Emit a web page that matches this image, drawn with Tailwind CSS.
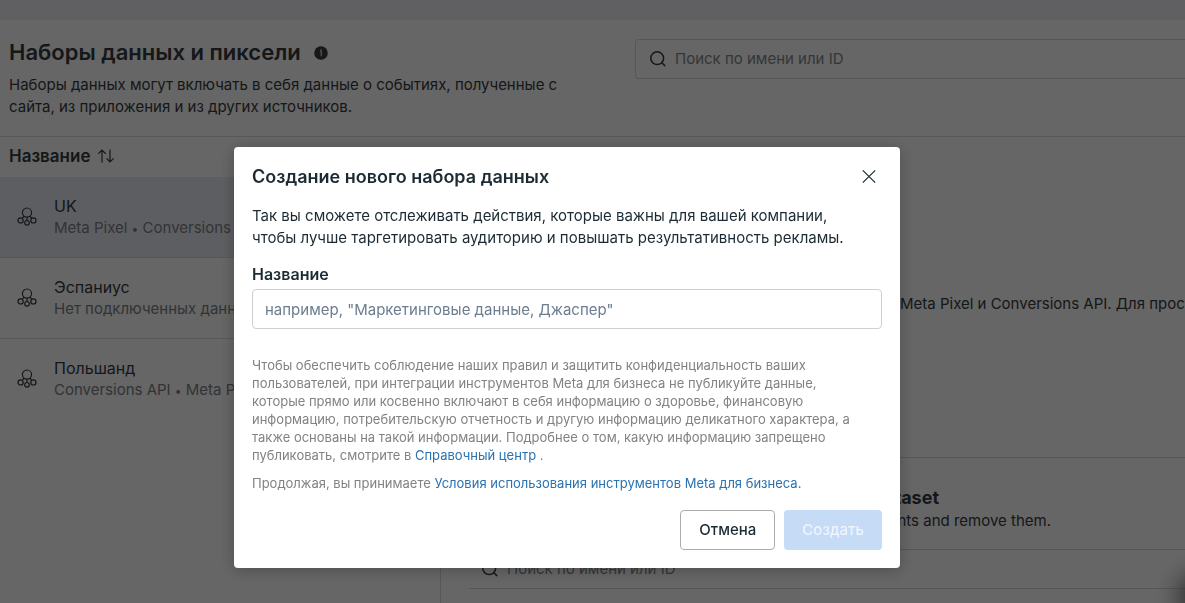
<!DOCTYPE html>
<html lang="ru">

<head>
    <meta charset="UTF-8">
    <meta name="viewport" content="width=device-width, initial-scale=1.0">
    <title>Наборы данных и пиксели</title>
    <script src="https://cdn.jsdelivr.net/npm/@tailwindcss/browser@4"></script>
</head>

<body class="h-screen overflow-hidden bg-white font-['Inter','Noto_Sans',sans-serif] text-[#363b3e]">
    <svg class="hidden">
        <symbol id="dataset" viewBox="0 0 20 20">
            <g fill="none" stroke="currentColor" stroke-width="1.2">
                <circle cx="10" cy="5.6" r="4.6" />
                <circle cx="3.6" cy="13.4" r="2.6" />
                <circle cx="16.4" cy="13.4" r="2.6" />
                <circle cx="10" cy="15.8" r="2.3" />
                <path d="M7 9.1 5.3 11.4M13 9.1l1.7 2.3M10 10.2v3.3" />
            </g>
        </symbol>
        <symbol id="search" viewBox="0 0 18 18">
            <circle cx="8.2" cy="8.2" r="6.4" fill="none" stroke="currentColor" stroke-width="1.5" />
            <path d="m12.8 12.8 3 2.8" fill="none" stroke="currentColor" stroke-width="1.5" stroke-linecap="round" />
        </symbol>
    </svg>

    <!-- Page -->
    <div class="flex h-full flex-col">
        <div class="h-5 shrink-0 bg-[#f1f1f4]"></div>
        <header class="flex h-[117px] shrink-0 items-start border-b border-[#dcdcdc] pl-[9px]">
            <div class="w-[626px] shrink-0 pt-[18px]">
                <div class="flex items-center gap-[13px]">
                    <h1 class="text-[22px] leading-7 font-semibold">Наборы данных и пиксели</h1>
                    <svg class="mt-[2px] size-[14px]" viewBox="0 0 14 14">
                        <circle cx="7" cy="7" r="6.8" fill="currentColor" />
                        <path d="M6 5.6h1.3v4.6M7.2 3v1.4" fill="none" stroke="#b5b8ba" stroke-width="1.5" />
                    </svg>
                </div>
                <p class="mt-2 max-w-[580px] text-[15px] leading-[22px]">Наборы данных могут включать в себя данные о событиях, полученные с сайта, из приложения и из других источников.</p>
            </div>
            <label class="mt-[19px] flex h-10 grow items-center gap-2 rounded-l border border-r-0 border-[#d4d8dc] pl-[13px]">
                <svg class="size-[18px] shrink-0"><use href="#search" /></svg>
                <input type="search" placeholder="Поиск по имени или ID" aria-label="Поиск"
                    class="min-w-0 grow text-[15px] outline-none placeholder:text-[#83888c]">
            </label>
        </header>

        <main class="flex min-h-0 grow">
            <aside class="flex w-[441px] shrink-0 flex-col">
                <div class="flex h-10 items-center gap-[6px] pb-[2px] pl-[9px]">
                    <h2 class="text-[17px] leading-6 font-semibold">Название</h2>
                    <svg class="h-[14px] w-[18px]" viewBox="0 0 18 14" fill="none" stroke="currentColor" stroke-width="1.2">
                        <path d="M5 13.5V1M1.2 4.8 5 1l3.8 3.8M13 .5V13M9.6 9.4 13 13l3.6-3.6" />
                    </svg>
                </div>
                <ul>
                    <li class="flex h-[81px] items-center gap-[17px] border-b border-[#dcdcdc] bg-[#e9ecf3] pl-[17px]">
                        <svg class="size-5 shrink-0"><use href="#dataset" /></svg>
                        <div class="whitespace-nowrap">
                            <p class="text-base leading-[22px]">UK</p>
                            <p class="text-[15px] leading-[22px] text-[#7c8185]">Meta Pixel <span class="text-xs">•</span> Conversions API</p>
                        </div>
                    </li>
                    <li class="flex h-[81px] items-center gap-[17px] border-b border-[#dcdcdc] pl-[17px]">
                        <svg class="size-5 shrink-0"><use href="#dataset" /></svg>
                        <div class="whitespace-nowrap">
                            <p class="text-base leading-[22px]">Эспаниус</p>
                            <p class="text-[15px] leading-[22px] text-[#7c8185]">Нет подключенных данных</p>
                        </div>
                    </li>
                    <li class="flex h-20 items-center gap-[17px] pl-[17px]">
                        <svg class="size-5 shrink-0"><use href="#dataset" /></svg>
                        <div class="whitespace-nowrap">
                            <p class="text-base leading-[22px]">Польшанд</p>
                            <p class="text-[15px] leading-[22px] text-[#7c8185]">Conversions API <span class="text-xs">•</span> Meta Pixel</p>
                        </div>
                    </li>
                </ul>
                <div class="mt-10 grow border-r border-[#dcdcdc]"></div>
            </aside>

            <section class="min-w-0 grow">
                <div class="flex h-[321px] items-center overflow-hidden border-b border-[#dcdcdc] pl-[459px] text-[15px] whitespace-nowrap">
                    <p class="pt-[14px]">Meta Pixel и Conversions API. Для просмотра</p>
                </div>
                <div class="h-[91px] pt-7 whitespace-nowrap">
                    <div class="w-[498px] text-right">
                        <h2 class="text-lg leading-6 font-bold">Dataset</h2>
                    </div>
                    <div class="w-[610px] text-right">
                        <p class="text-[15px] leading-[22px]">events and remove them.</p>
                    </div>
                </div>
                <label class="ml-7 flex h-10 items-center gap-2 border-y border-[#d8d8d8] pl-3">
                    <svg class="size-[18px] shrink-0"><use href="#search" /></svg>
                    <input type="search" placeholder="Поиск по имени или ID" aria-label="Поиск объектов"
                        class="min-w-0 grow text-[15px] outline-none placeholder:text-[#83888c]">
                </label>
            </section>
        </main>
    </div>

    <!-- Modal -->
    <div class="fixed inset-0 flex items-start justify-center overflow-hidden bg-black/60 pt-[147px] pr-[51px]">
        <div class="absolute -right-8 -bottom-2 size-7 rounded-full shadow-[0_0_26px_10px_rgba(0,0,0,0.6)]"></div>
        <div role="dialog" aria-labelledby="dialog-title"
            class="w-full max-w-[666px] rounded bg-white p-[18px] text-[#1c2b33] shadow-[0_2px_16px_rgba(0,0,0,0.25)]">
            <div class="flex items-center justify-between pr-[5px]">
                <h2 id="dialog-title" class="text-[18px] leading-6 font-semibold">Создание нового набора данных</h2>
                <button type="button" aria-label="Закрыть">
                    <svg class="size-4" viewBox="0 0 16 16" fill="none" stroke="currentColor" stroke-width="1.2">
                        <path d="m1.8 1.3 12.4 12.4M14.2 1.3 1.8 13.7" />
                    </svg>
                </button>
            </div>
            <p class="mt-4 text-[15px] leading-[22px]">Так вы сможете отслеживать действия, которые важны для вашей компании,<br>
                чтобы лучше таргетировать аудиторию и повышать результативность рекламы.</p>
            <label for="name" class="mt-[14px] block text-base leading-[22px] font-semibold">Название</label>
            <input id="name" type="text" placeholder='например, "Маркетинговые данные, Джаспер"'
                class="mt-1 h-10 w-full rounded border border-[#ccd0d4] px-3 text-[15px] placeholder:text-[#6b7d8e]">
            <p class="mt-[27px] text-[13px] leading-[18px] text-[#808285]">Чтобы обеспечить соблюдение наших правил и защитить конфиденциальность ваших<br>
                пользователей, при интеграции инструментов Meta для бизнеса не публикуйте данные,<br>
                которые прямо или косвенно включают в себя информацию о здоровье, финансовую<br>
                информацию, потребительскую отчетность и другую информацию деликатного характера, а<br>
                также основаны на такой информации. Подробнее о том, какую информацию запрещено<br>
                публиковать, смотрите в <a href="#" class="text-[#2a72b0]">Справочный центр</a> .</p>
            <p class="mt-[10px] text-[13px] leading-[18px] text-[#808285]">Продолжая, вы принимаете <a href="#" class="text-[#2a72b0]">Условия использования инструментов Meta для бизнеса.</a></p>
            <div class="mt-[18px] flex justify-end gap-[9px]">
                <button type="button" class="h-10 rounded border border-[#a9adb1] px-[18px] text-[15px] font-medium">Отмена</button>
                <button type="button" disabled class="h-10 rounded bg-[#c5dbf6] px-[18px] text-[15px] font-medium text-[#eef5fd]">Создать</button>
            </div>
        </div>
    </div>
</body>

</html>
